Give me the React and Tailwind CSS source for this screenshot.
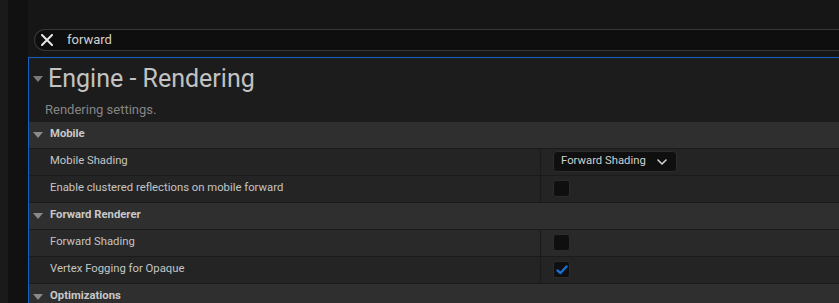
import React from "react";

const font = { fontFamily: "Roboto, 'Noto Sans', sans-serif" };

function Tri({ className = "" }) {
  return (
    <svg width="10" height="6" viewBox="0 0 10 6" className={className}>
      <path d="M0 0 L10 0 L5 6 Z" fill="currentColor" />
    </svg>
  );
}

function Category({ label }) {
  return (
    <div className="h-[26px] bg-[#2f2f2f] flex items-center border-b border-[#1b1b1b] box-content">
      <Tri className="ml-[4px] text-[#8a8a8a]" />
      <span className="ml-[7px] text-[11.3px] font-bold text-[#c8c8c8]">{label}</span>
    </div>
  );
}

function Item({ label, children, hover }) {
  return (
    <div
      className={`h-[26px] flex border-b border-[#1b1b1b] box-content ${
        hover ? "bg-[#292929]" : "bg-[#242424]"
      }`}
    >
      <div className="w-[512px] flex items-center pl-[21px] text-[11.3px] text-[#c4c4c4] border-r border-[#1a1a1a]">
        {label}
      </div>
      <div className="flex-1 flex items-center pl-[12px]">{children}</div>
    </div>
  );
}

function Check({ checked }) {
  return (
    <div className="w-[17px] h-[17px] rounded-[3px] bg-[#0f0f0f] border border-[#2c2c2c] flex items-center justify-center">
      {checked && (
        <svg width="12" height="10" viewBox="0 0 12 10">
          <path d="M1.5 5.5 L4.5 8 L10.5 1.5" stroke="#1a6fd6" strokeWidth="2.4" fill="none" strokeLinecap="round" strokeLinejoin="round" />
        </svg>
      )}
    </div>
  );
}

export default function App() {
  return (
    <div className="w-[839px] h-[303px] bg-[#161616] overflow-hidden flex" style={font}>
      <div className="w-[28px] h-full flex shrink-0">
        <div className="w-[8px] h-full bg-[#1a1a1a]" />
        <div className="flex-1 h-full bg-[#111111]" />
      </div>
      <div className="flex-1 flex flex-col">
        <div className="h-[22px] mt-[29px] ml-[6px] rounded-l-full border-y border-l border-[#383838] bg-[#0e0e0e] flex items-center">
          <svg width="12" height="12" viewBox="0 0 12 12" className="ml-[6px]">
            <path d="M1 1 L11 11 M11 1 L1 11" stroke="#e6e6e6" strokeWidth="2" strokeLinecap="round" />
          </svg>
          <span className="ml-[14px] text-[13px] text-[#d2d2d2]">forward</span>
        </div>
        <div className="mt-[6px] flex-1 border-t border-l border-[#1160c4] bg-[#1c1c1c] flex flex-col">
          <div className="h-[63px] flex flex-col">
            <div className="flex items-center mt-[6px]">
              <Tri className="ml-[4px] text-[#7a7a7a]" />
              <span className="ml-[5px] text-[25px] leading-[30px] text-[#c2c2c2]">Engine - Rendering</span>
            </div>
            <div className="ml-[16px] mt-[6px] text-[13px] text-[#858585]">Rendering settings.</div>
          </div>
          <div className="border-t border-[#1b1b1b]" />
          <Category label="Mobile" />
          <Item label="Mobile Shading">
            <div className="w-[124px] h-[21px] rounded-[4px] bg-[#0f0f0f] border border-[#2c2c2c] flex items-center pl-[7px] text-[11.3px] text-[#cfcfcf]">
              Forward Shading
              <svg width="10" height="6" viewBox="0 0 10 6" className="ml-[11px]">
                <path d="M1 1 L5 5 L9 1" stroke="#d0d0d0" strokeWidth="1.6" fill="none" strokeLinecap="round" strokeLinejoin="round" />
              </svg>
            </div>
          </Item>
          <Item label="Enable clustered reflections on mobile forward">
            <Check />
          </Item>
          <Category label="Forward Renderer" />
          <Item label="Forward Shading" hover>
            <Check />
          </Item>
          <Item label="Vertex Fogging for Opaque">
            <Check checked />
          </Item>
          <Category label="Optimizations" />
        </div>
      </div>
    </div>
  );
}
